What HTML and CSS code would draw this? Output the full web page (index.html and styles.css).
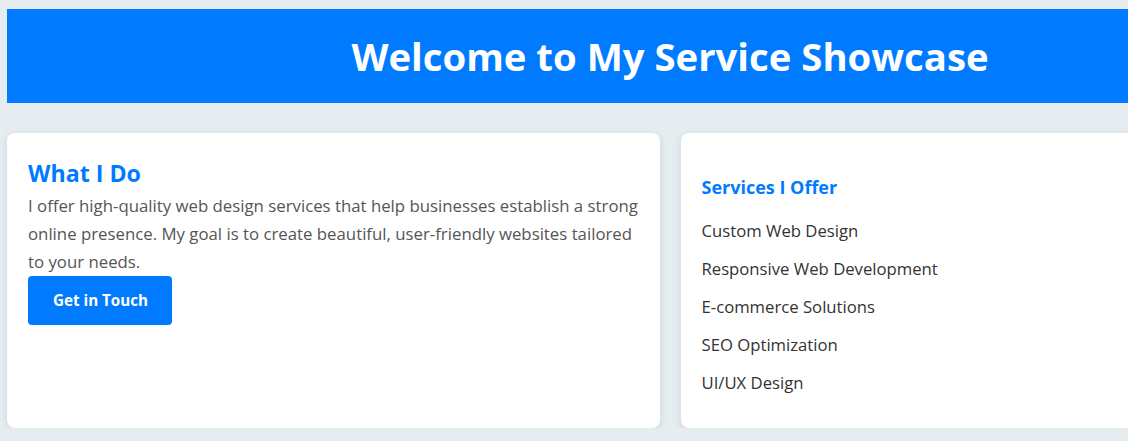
FILE: index.html
```html
<!DOCTYPE html>
<html lang="en">
<head>
<meta charset="utf-8">
<title>My Service Showcase</title>
<link rel="stylesheet" href="styles.css">
</head>
<body>
<div class="page">
  <header class="hero">
    <h1 class="hero-title">Welcome to My Service Showcase</h1>
  </header>
  <main class="cards">
    <section class="card">
      <h2 class="card-title">What I Do</h2>
      <p class="card-text">I offer high-quality web design services that help businesses establish a strong online presence. My goal is to create beautiful, user-friendly websites tailored to your needs.</p>
      <a class="btn" href="#">Get in Touch</a>
    </section>
    <section class="card card-list">
      <h3 class="list-title">Services I Offer</h3>
      <ul class="service-list">
        <li>Custom Web Design</li>
        <li>Responsive Web Development</li>
        <li>E-commerce Solutions</li>
        <li>SEO Optimization</li>
        <li>UI/UX Design</li>
      </ul>
    </section>
  </main>
</div>
</body>
</html>
```

FILE: styles.css
```css
html, body {
  margin: 0;
  padding: 0;
  overflow: hidden;
}
body {
  background: #e5edf0;
  font-family: "Segoe UI", "Open Sans", "Noto Sans", sans-serif;
  color: #555;
}
.page {
  width: 1326px;
  padding: 9px 0 0 7px;
}
.hero {
  background: #007bff;
  height: 94px;
  display: flex;
  align-items: center;
  justify-content: center;
}
.hero-title {
  margin: 0;
  color: #fff;
  font-size: 38.3px;
  font-weight: 700;
}
.cards {
  display: grid;
  grid-template-columns: 1fr 1fr;
  gap: 21px;
  margin-top: 30px;
}
.card {
  background: #fff;
  border-radius: 8px;
  padding: 21px 21px 20px;
  box-shadow: 0 2px 8px rgba(0, 0, 0, 0.1);
}
.card-list {
  padding: 20px 21px 26px;
}
.card-title {
  margin: 0;
  color: #007bff;
  font-size: 23.2px;
  line-height: 38px;
}
.card-text {
  margin: 0;
  font-size: 16.8px;
  line-height: 28px;
}
.btn {
  display: inline-block;
  background: #007bff;
  color: #fff;
  font-weight: 700;
  font-size: 15.2px;
  line-height: 23px;
  text-decoration: none;
  padding: 13px 24px 13px 25px;
  border-radius: 4px;
}
.list-title {
  margin: 22px 0 13px;
  color: #007bff;
  font-size: 18px;
}
.service-list {
  list-style: none;
  margin: 0;
  padding: 0;
  color: #333;
  font-size: 16.7px;
}
.service-list li {
  padding: 5px 0;
  line-height: 28px;
}
```
